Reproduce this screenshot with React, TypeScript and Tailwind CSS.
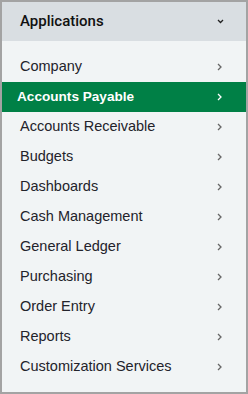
const items = [
  'Company',
  'Accounts Payable',
  'Accounts Receivable',
  'Budgets',
  'Dashboards',
  'Cash Management',
  'General Ledger',
  'Purchasing',
  'Order Entry',
  'Reports',
  'Customization Services',
]

function ChevronRight() {
  return (
    <svg width="5" height="8" viewBox="0 0 5 8" fill="none">
      <path d="M1 1l3 3-3 3" stroke="currentColor" strokeWidth="1.3" />
    </svg>
  )
}

export default function App() {
  return (
    <div className="w-[248px] h-[394px] border-2 border-[#a3a3a3] bg-[#f1f4f5] flex flex-col font-['Liberation_Sans',Arial,sans-serif]">
      <div className="h-[39px] bg-[#d9dee2] flex items-center justify-between pl-[18px] pr-[22px]">
        <span className="font-['Roboto',sans-serif] text-[15px] font-medium text-[#111]">Applications</span>
        <svg width="7" height="5" viewBox="0 0 7 5" fill="none" className="text-[#222]">
          <path d="M1 1l2.5 2.5L6 1" stroke="currentColor" strokeWidth="1.3" />
        </svg>
      </div>
      <ul className="pt-[11px]">
        {items.map((name) => {
          const active = name === 'Accounts Payable'
          return (
            <li
              key={name}
              className={
                active
                  ? 'h-[30px] flex items-center justify-between pl-[15px] pr-[24px] bg-[#008046] text-white font-bold text-[13.6px]'
                  : 'h-[30px] flex items-center justify-between pl-[18px] pr-[24px] text-[#23232b] text-[14.5px]'
              }
            >
              <span>{name}</span>
              <span className={active ? 'text-white' : 'text-[#666]'}>
                <ChevronRight />
              </span>
            </li>
          )
        })}
      </ul>
    </div>
  )
}
